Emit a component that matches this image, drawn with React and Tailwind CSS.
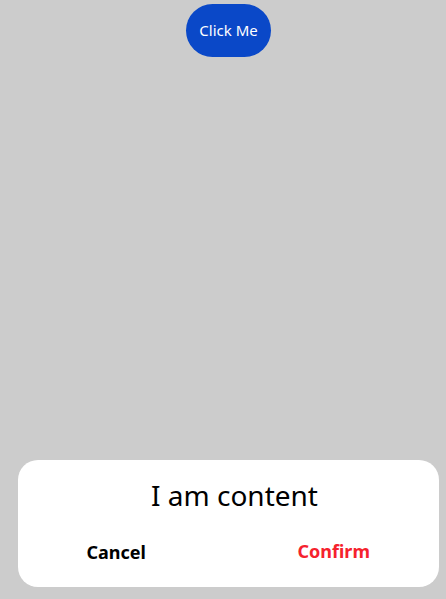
import React from "react";

const App = () => {
  return (
    <div
      className="w-[446px] h-[599px] bg-[#cccccc] flex flex-col items-center overflow-hidden"
      style={{ fontFamily: '"Noto Sans", Inter, sans-serif' }}
    >
      {/* Trigger */}
      <button className="mt-[4px] ml-[11px] w-[85px] h-[53px] rounded-full bg-[#0a48c8] text-white text-[15px] leading-none">
        Click Me
      </button>

      <div className="flex-1" />

      {/* Dialog */}
      <div className="mb-[12px] ml-[11px] w-[421px] h-[127px] bg-white rounded-[20px] flex flex-col">
        <div className="pt-[17px] pl-[12px] text-center text-[28px] leading-[36px] text-black">
          I am content
        </div>
        <div className="flex mt-[26px]">
          <button className="w-1/2 pr-[14px] text-[18px] font-bold leading-[24px] text-black mt-[1px]">
            Cancel
          </button>
          <button className="w-1/2 text-[18px] font-bold leading-[24px] text-[#f5222d] mt-[-1px]">
            Confirm
          </button>
        </div>
      </div>
    </div>
  );
};

export default App;
